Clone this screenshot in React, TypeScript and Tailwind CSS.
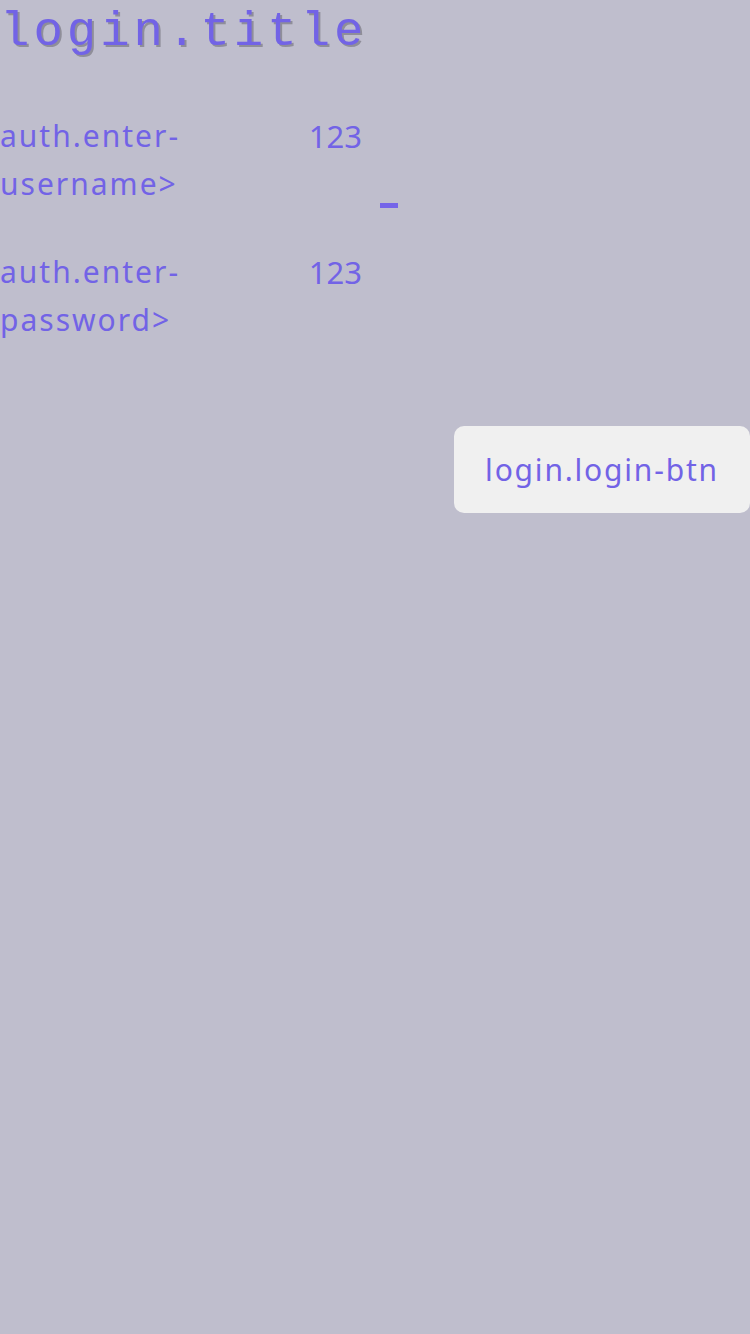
import React from 'react'

function Field({ label, value, caret }: { label: string; value: string; caret?: boolean }) {
  return (
    <div className="flex items-end">
      <div className="w-[190px] leading-[48px] tracking-[2px]">{label}</div>
      <div className="w-[172px] self-start text-right text-[31px] leading-[48px]">{value}</div>
      <div className="ml-[18px] w-[18px] h-[5px]">
        {caret && <div className="w-[18px] h-[5px] bg-[#7565e8]" />}
      </div>
    </div>
  )
}

export default function App() {
  return (
    <div className="min-h-[1334px] w-[750px] bg-[#bfbecd] text-[#7263e6] font-['Noto_Sans',sans-serif] text-[30px]">
      {/* title */}
      <h1 className="pt-[4px] font-['Liberation_Mono',monospace] font-normal text-[49px] leading-[56px] tracking-[4px] [text-shadow:2px_2px_0_#8f8e99]">
        login.title
      </h1>
      <div className="mt-[52px] flex flex-col gap-[40px]">
        <Field label="auth.enter-username>" value="123" caret />
        <Field label="auth.enter-password>" value="123" />
      </div>
      <div className="mt-[82px] flex justify-end">
        <button className="w-[296px] h-[87px] rounded-[10px] bg-[#f0f0f0] text-[#7263e6] text-[30px] tracking-[1.8px]">
          login.login-btn
        </button>
      </div>
    </div>
  )
}
